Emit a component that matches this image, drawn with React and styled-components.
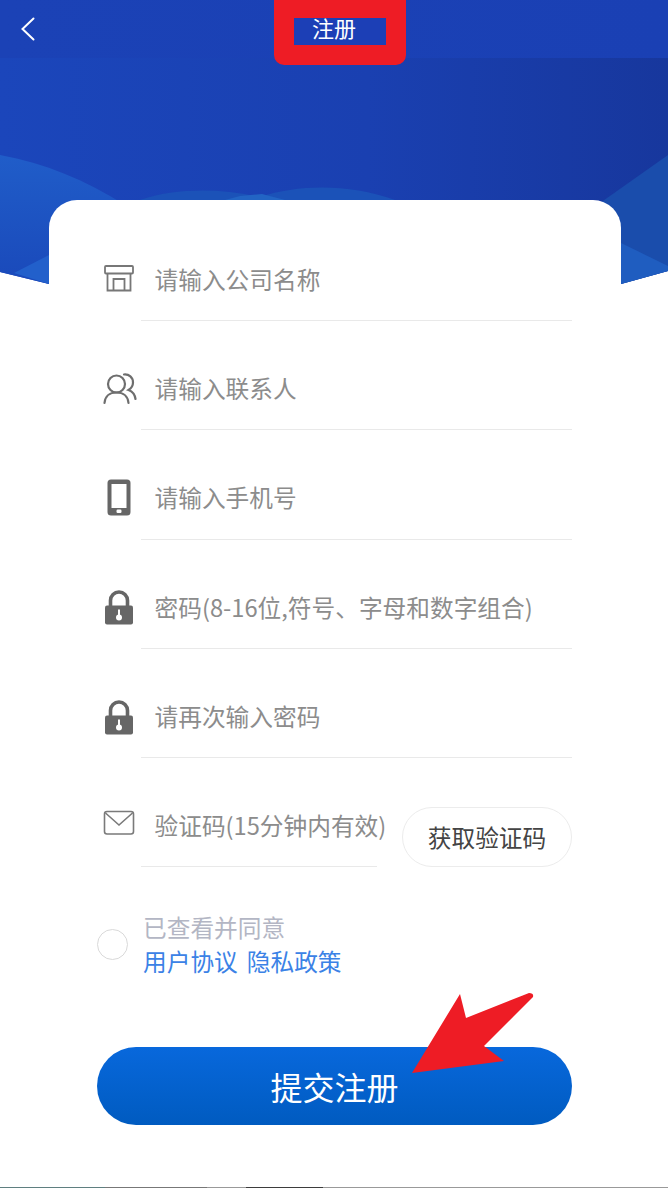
import React from 'react';
import styled, { createGlobalStyle } from 'styled-components';

const GlobalStyle = createGlobalStyle`
  html, body {
    margin: 0;
    padding: 0;
    background: #fff;
    font-family: "Noto Sans CJK SC", "Noto Sans", sans-serif;
  }
`;

const Page = styled.div`
  position: relative;
  width: 668px;
  height: 1188px;
  overflow: hidden;
  background: #fff;
`;

const Hero = styled.header`
  position: relative;
  height: 284px;
`;

const HeroArt = styled.svg`
  position: absolute;
  inset: 0;
  display: block;
`;

const Nav = styled.nav`
  position: relative;
  display: grid;
  grid-template-columns: 274px 132px;
  height: 58px;
  background: linear-gradient(90deg, #1b42b6 0%, #1a40b4 100%);
`;

const BackButton = styled.div`
  display: flex;
  align-items: center;
  height: 58px;
  padding-left: 20px;
  color: #fff;
`;

// red marker someone drew round the title on the screenshot
const TitleMark = styled.div`
  box-sizing: border-box;
  width: 132px;
  height: 65px;
  border: solid #ee1c25;
  border-width: 18px 20px 20px;
  border-radius: 0 0 10px 10px;
  background: #1c3fb6;
`;

const Title = styled.h1`
  margin: 0;
  padding-left: 18px;
  font-size: 22px;
  font-weight: 400;
  line-height: 19px;
  color: #fff;
`;

const Card = styled.main`
  position: relative;
  box-sizing: border-box;
  width: 572px;
  margin: -84px 0 0 49px;
  padding: 12px 49px 0 48px;
  border-radius: 28px 28px 0 0;
  background: #fff;
`;

const Row = styled.div`
  display: flex;
  height: 109.2px;
  margin-left: 6px;
`;

const IconSlot = styled.div`
  flex: none;
  width: 38px;
  padding-top: ${(p) => p.$top}px;
`;

const Field = styled.div`
  flex: ${(p) => (p.$short ? '0 0 236px' : '1')};
  min-width: 0;
  box-sizing: border-box;
  padding: 50px 0 0 13.5px;
  border-bottom: 1px solid #e9e9e9;
  font-size: 23.7px;
  line-height: 34px;
  color: #8c8c8c;
  white-space: nowrap;
`;

const CodeButton = styled.div`
  flex: none;
  box-sizing: border-box;
  width: 170px;
  height: 60px;
  margin: 49.2px 0 0 25px;
  border: 1px solid #ececec;
  border-radius: 30px;
  font-size: 23.7px;
  line-height: 59px;
  text-align: center;
  color: #444;
`;

const Agreement = styled.div`
  display: flex;
  align-items: center;
  gap: 15px;
  margin-top: 43px;
`;

const Radio = styled.span`
  flex: none;
  box-sizing: border-box;
  width: 31px;
  height: 31px;
  border: 1px solid #d9d9d9;
  border-radius: 50%;
`;

const AgreementText = styled.div`
  font-size: 23.7px;
  line-height: 34px;
  color: #b3b6c4;
`;

const Links = styled.div`
  display: flex;
  gap: 9px;
  color: #3b82e6;
`;

const SubmitButton = styled.div`
  height: 78px;
  margin-top: 69px;
  border-radius: 39px;
  background: linear-gradient(180deg, #0868dc 0%, #005bc0 100%);
  font-size: 32px;
  line-height: 78px;
  text-align: center;
  color: #fff;
`;

const BottomEdge = styled.div`
  position: absolute;
  left: 0;
  right: 0;
  bottom: 0;
  height: 1px;
  background: linear-gradient(90deg, #5f7f80 0 105px, #777 105px 207px, #999 207px 246px, #3d3d3d 246px 323px, #999 323px 668px);
`;

const ArrowMark = styled.svg`
  position: absolute;
  left: 400px;
  top: 985px;
`;

const StoreIcon = () => (
  <svg width="32" height="28" viewBox="0 0 32 28" fill="none" stroke="#777" strokeWidth="1.800">
    <rect x="2" y="2" width="28" height="7.500" rx="1" />
    <path d="M4.500 10v16.500h23V10M10.500 26V15h11v11" />
  </svg>
);

const UsersIcon = () => (
  <svg width="34" height="32" viewBox="0 0 34 32" fill="none" stroke="#6e6e6e" strokeWidth="2.200" strokeLinecap="round">
    <circle cx="13.500" cy="11" r="8.500" />
    <path d="M1.500 30c.5-6.500 5-10.500 12-10.500s11.500 4 12 10.500" />
    <path d="M21 1.500c5-.5 9 3 9 8 0 3.500-2 6-4.500 7.500 4 1.500 6.500 5 7 9" />
  </svg>
);

const PhoneIcon = () => (
  <svg width="24" height="37" viewBox="0 0 24 37">
    <rect x="0.500" y="0.500" width="23" height="36" rx="3.500" fill="#666" />
    <rect x="4.500" y="5" width="15" height="24" fill="#fff" />
    <rect x="9.500" y="30.500" width="5" height="3.500" rx="1.200" fill="#fff" />
  </svg>
);

const LockIcon = () => (
  <svg width="30" height="35" viewBox="0 0 30 35">
    <path d="M6.500 17V10.500a8.500 8.500 0 0 1 17 0V17" fill="none" stroke="#666" strokeWidth="3.600" />
    <rect x="1" y="15.500" width="28" height="19" rx="2" fill="#666" />
    <circle cx="15" cy="27.500" r="3" fill="#fff" />
    <rect x="14" y="19.500" width="2" height="7" fill="#fff" />
  </svg>
);

const MailIcon = () => (
  <svg width="32" height="26" viewBox="0 0 32 26" fill="none" stroke="#7a7a7a" strokeWidth="1.600">
    <rect x="1.500" y="1.500" width="29" height="22.500" rx="2.500" />
    <path d="M2.500 3l13.500 12L29.500 3" />
  </svg>
);

const rows = [
  { icon: <StoreIcon />, top: 52, text: '请输入公司名称' },
  { icon: <UsersIcon />, top: 52, text: '请输入联系人' },
  { icon: <PhoneIcon />, top: 49, left: 4, text: '请输入手机号' },
  { icon: <LockIcon />, top: 50, left: 1, text: '密码(8-16位,符号、字母和数字组合)' },
  { icon: <LockIcon />, top: 51, left: 1, text: '请再次输入密码' },
];

const IconBox = styled.div`
  margin-left: ${(p) => p.$left || 0}px;
  line-height: 0;
`;

export default function App() {
  return (
    <Page>
      <GlobalStyle />
      <Hero>
        <HeroArt width="668" height="284" viewBox="0 0 668 284">
          <defs>
            <linearGradient id="heroBg" x1="0" y1="0" x2="1" y2="0">
              <stop offset="0" stopColor="#1b46bb" />
              <stop offset="0.55" stopColor="#1a40b1" />
              <stop offset="1" stopColor="#17379d" />
            </linearGradient>
            <linearGradient id="waveLeft" x1="0" y1="0" x2="0" y2="1">
              <stop offset="0" stopColor="#205dc9" />
              <stop offset="1" stopColor="#1a49ba" />
            </linearGradient>
          </defs>
          <path d="M0 0H668V271L621 284H49L0 272Z" fill="url(#heroBg)" />
          <path d="M0 155C45 163 85 180 125 205V284H49L0 272Z" fill="url(#waveLeft)" />
          <path d="M14 273L49 255V284Z" fill="#2260cb" />
          <path d="M140 200C175 188 220 188 260 197C300 184 350 184 395 200Z" fill="#1b52b8" />
          <path d="M225 200L240 196L262 194L285 200Z" fill="#2264c4" />
          <path d="M668 155L600 203L621 284L668 271Z" fill="#1a4dac" />
          <path d="M621 243L668 266V271L621 284Z" fill="#1f5dc0" />
        </HeroArt>
        <Nav>
          <BackButton>
            <svg width="16" height="24" viewBox="0 0 16 24" fill="none" stroke="#fff" strokeWidth="2" strokeLinecap="round">
              <path d="M13.500 1.500L2.500 12l11 10.500" />
            </svg>
          </BackButton>
          <TitleMark>
            <Title>注册</Title>
          </TitleMark>
        </Nav>
      </Hero>
      <Card>
        {rows.map((row) => (
          <Row key={row.text}>
            <IconSlot $top={row.top}>
              <IconBox $left={row.left}>{row.icon}</IconBox>
            </IconSlot>
            <Field>{row.text}</Field>
          </Row>
        ))}
        <Row>
          <IconSlot $top={52}>
            <IconBox><MailIcon /></IconBox>
          </IconSlot>
          <Field $short>验证码(15分钟内有效)</Field>
          <CodeButton>获取验证码</CodeButton>
        </Row>
        <Agreement>
          <Radio />
          <AgreementText>
            <div>已查看并同意</div>
            <Links>
              <span>用户协议</span>
              <span>隐私政策</span>
            </Links>
          </AgreementText>
        </Agreement>
        <SubmitButton>提交注册</SubmitButton>
      </Card>
      <ArrowMark width="140" height="95" viewBox="0 0 140 95">
        <path d="M12 88L60 9L66 33L129 8Q134 8 133 12L84 61L104 76Z" fill="#ee1c25" />
      </ArrowMark>
      <BottomEdge />
    </Page>
  );
}
